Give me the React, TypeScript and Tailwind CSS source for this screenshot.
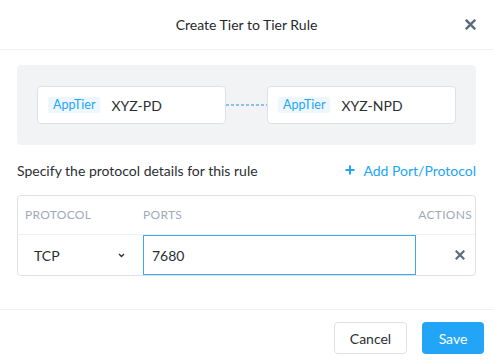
import React from "react";

const XIcon = ({ size = 10, color = "#5b6b80" }: { size?: number; color?: string }) => (
  <svg width={size} height={size} viewBox="0 0 10 10">
    <path d="M1.5 1.5 L8.5 8.5 M8.5 1.5 L1.5 8.5" stroke={color} strokeWidth="2.2" strokeLinecap="square" />
  </svg>
);

const Card = ({ name }: { name: string }) => (
  <div className="flex h-[38px] flex-1 items-center rounded-[4px] border border-[#dde1e7] bg-white pl-[10px]">
    <span className="flex h-[16px] items-center rounded-[2px] bg-[#eef7fe] px-[5px] text-[12.5px] text-[#22a5f7]">AppTier</span>
    <span className="ml-[11px] text-[14px] text-[#2b2f33]">{name}</span>
  </div>
);

export default function App() {
  return (
    <div className="h-[362px] w-[493px] bg-white text-[#2b2f33]" style={{ fontFamily: "Lato, 'Open Sans', sans-serif" }}>
      <div className="relative flex h-[50px] items-center justify-center border-b border-[#eef0f2]">
        <span className="text-[14px] text-[#25292d]">Create Tier to Tier Rule</span>
        <span className="absolute right-[17px] top-[19px]">
          <XIcon size={11} />
        </span>
      </div>
      <div className="px-[17px] pt-[15px]">
        <div className="flex h-[80px] items-center rounded-[4px] bg-[#f2f3f5] pl-[20px] pr-[20px]">
          <Card name="XYZ-PD" />
          <svg width="41" height="2" viewBox="0 0 41 2" className="shrink-0">
            <line x1="0" y1="1" x2="41" y2="1" stroke="#2f8ae6" strokeWidth="1" strokeDasharray="3 2" />
          </svg>
          <Card name="XYZ-NPD" />
        </div>
        <div className="mt-[17px] flex h-[16px] items-center justify-between">
          <span className="text-[14px] text-[#2b2f33]">Specify the protocol details for this rule</span>
          <span className="flex items-center text-[14px] text-[#22a5f7]">
            <svg width="10" height="10" viewBox="0 0 10 10" className="mr-[8px]">
              <path d="M5 0.5 V9.5 M0.5 5 H9.5" stroke="#22a5f7" strokeWidth="2" />
            </svg>
            Add Port/Protocol
          </span>
        </div>
        <div className="mt-[17px] rounded-[4px] border border-[#dde1e7]">
          <div className="flex h-[39px] items-center border-b border-[#eef0f2] text-[12px] tracking-[0.3px] text-[#a0aabb]">
            <span className="w-[125px] pl-[7px]">PROTOCOL</span>
            <span className="flex-1">PORTS</span>
            <span className="pr-[3px]">ACTIONS</span>
          </div>
          <div className="flex h-[40px] items-stretch">
            <div className="flex w-[125px] items-center justify-between pl-[16px] pr-[18px] text-[14px]">
              <span>TCP</span>
              <svg width="7" height="5" viewBox="0 0 7 5">
                <path d="M1 1 L3.5 3.5 L6 1" stroke="#2b2f33" strokeWidth="1.4" fill="none" />
              </svg>
            </div>
            <div className="flex w-[273px] items-center border border-solid border-[color:#3ea9f2] pl-[8px] text-[14px]">7680</div>
            <div className="flex flex-1 items-center justify-end pr-[10px]">
              <XIcon size={10} />
            </div>
          </div>
        </div>
      </div>
      <div className="mt-[33px] flex items-center justify-end gap-[15px] border-t border-[#eef0f2] pr-[9px] pt-[12px]">
        <button className="flex h-[32px] w-[73px] items-center justify-center rounded-[4px] border border-[#dde1e7] bg-white text-[14px] text-[#2b2f33]">Cancel</button>
        <button className="flex h-[32px] w-[62px] items-center justify-center rounded-[4px] bg-[#22a5f7] text-[14px] text-white">Save</button>
      </div>
    </div>
  );
}
